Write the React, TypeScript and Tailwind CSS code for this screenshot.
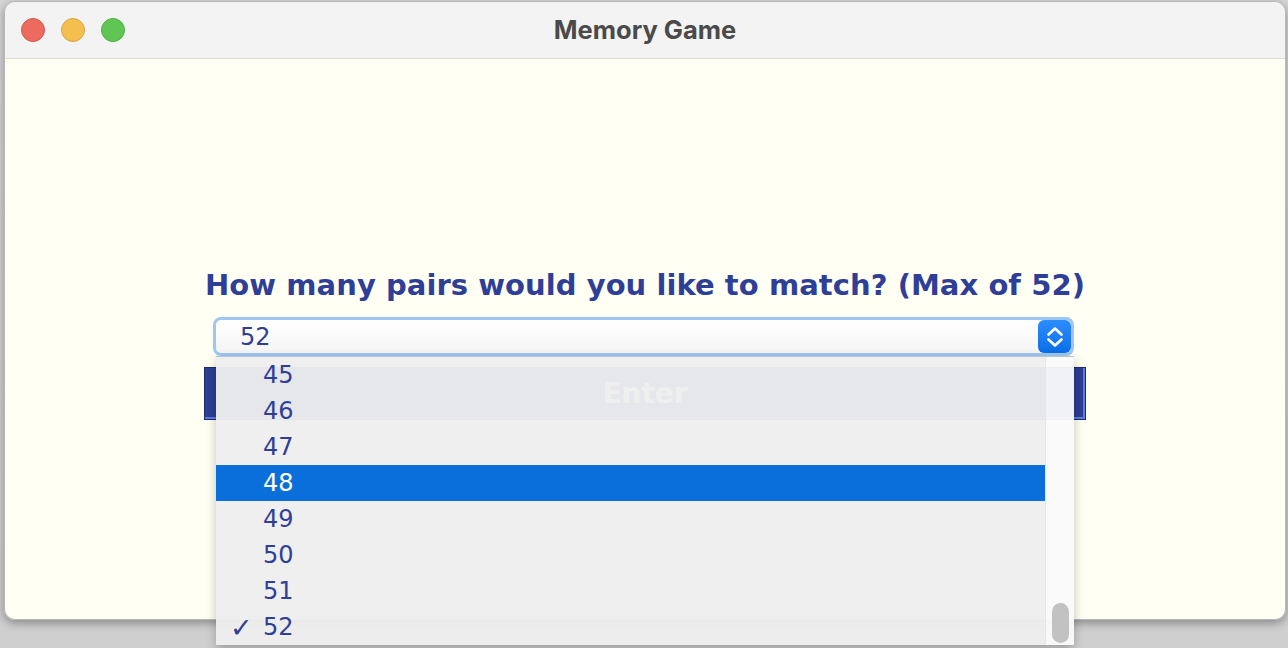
import React from 'react'

const items = [45, 46, 47, 48, 49, 50, 51, 52]
const selected = 52
const hovered = 48

const TrafficLights: React.FC = () => (
  <div className="flex items-center gap-[16px] pl-[16px]">
    <span className="block w-[24px] h-[24px] rounded-full bg-[#ed6a5e] border border-[#d4584c]" />
    <span className="block w-[24px] h-[24px] rounded-full bg-[#f5bf4f] border border-[#d9a441]" />
    <span className="block w-[24px] h-[24px] rounded-full bg-[#61c554] border border-[#4fae44]" />
  </div>
)

const Stepper: React.FC = () => (
  <div className="w-[33px] h-[33px] rounded-[6px] bg-gradient-to-b from-[#2c8dff] to-[#0a6ee6] flex items-center justify-center">
    <svg width="22" height="26" viewBox="0 0 22 26" fill="none">
      <path d="M4.5 10.5 L11 4.5 L17.5 10.5" stroke="white" strokeWidth="2.6" strokeLinecap="round" strokeLinejoin="round" />
      <path d="M4.5 15.5 L11 21.5 L17.5 15.5" stroke="white" strokeWidth="2.6" strokeLinecap="round" strokeLinejoin="round" />
    </svg>
  </div>
)

const App: React.FC = () => {
  return (
    <div className="w-[1288px] h-[648px] overflow-hidden bg-gradient-to-b from-[#d6d6d6] to-[#cfcfcf] pl-[4px] pt-[1px]">
      <div className="w-[1282px] h-[619px] flex flex-col rounded-[11px] shadow-[0_3px_10px_rgba(0,0,0,0.35)] border border-[#b8b8b8]">
        {/* Title bar */}
        <div className="h-[57px] shrink-0 grid grid-cols-[1fr_auto_1fr] items-center bg-[#f3f3f3] border-b border-[#dddcd4] rounded-t-[10px]">
          <TrafficLights />
          <div className="text-[25.5px] font-bold text-[#4a4a4a] font-['Inter',sans-serif]">Memory Game</div>
          <div />
        </div>

        {/* Content */}
        <div className="flex-1 bg-[#fffff3] rounded-b-[10px] flex flex-col items-center pt-[206px] font-['DejaVu_Sans',sans-serif]">
          <h1 className="text-[29px] leading-[40px] font-bold text-[#2f3f97] tracking-[0.05px]">
            How many pairs would you like to match? (Max of 52)
          </h1>

          <div className="relative w-[882px] mt-[12px] flex flex-col">
            {/* Combo box */}
            <div className="ml-[9px] w-[861px] h-[39px] rounded-[8px] border-[3px] border-[#9ec8f3] bg-gradient-to-b from-white to-[#f5f5f5] flex items-center justify-between">
              <span className="pl-[24px] text-[24px] text-[#2f3f97] leading-none">52</span>
              <Stepper />
            </div>

            {/* Enter button */}
            <button className="mt-[11px] h-[53px] w-[882px] bg-[#2d3e94] border border-[#1e2a6c] shadow-[inset_-2px_-2px_0_#5a7ee6] text-white text-[28px] font-bold">
              Enter
            </button>

            {/* Popup list */}
            <div className="absolute left-[12px] top-[39px] w-[858px] h-[289px] border-t border-[#b9c4cf] flex shadow-[0_4px_10px_rgba(0,0,0,0.25)]">
              <div className="flex-1 bg-[#eeeeee]/[0.96] flex flex-col">
                {items.map((n) => (
                  <div
                    key={n}
                    className={
                      n === hovered
                        ? 'h-[36px] shrink-0 flex items-center bg-[#0a6fdb] text-white text-[24px]'
                        : 'h-[36px] shrink-0 flex items-center text-[#2f3f97] text-[24px]'
                    }
                  >
                    <span className="w-[47px] pl-[14px] text-[27px] font-bold leading-none">{n === selected ? '✓' : ''}</span>
                    <span>{n}</span>
                  </div>
                ))}
              </div>
              <div className="w-[29px] bg-[#fafafa]/[0.96] border-l border-[#e6e6e6] flex flex-col justify-end items-center pb-[2px]">
                <div className="w-[17px] h-[40px] rounded-full bg-[#c2c2c2]" />
              </div>
            </div>
          </div>
        </div>
      </div>
    </div>
  )
}

export default App
